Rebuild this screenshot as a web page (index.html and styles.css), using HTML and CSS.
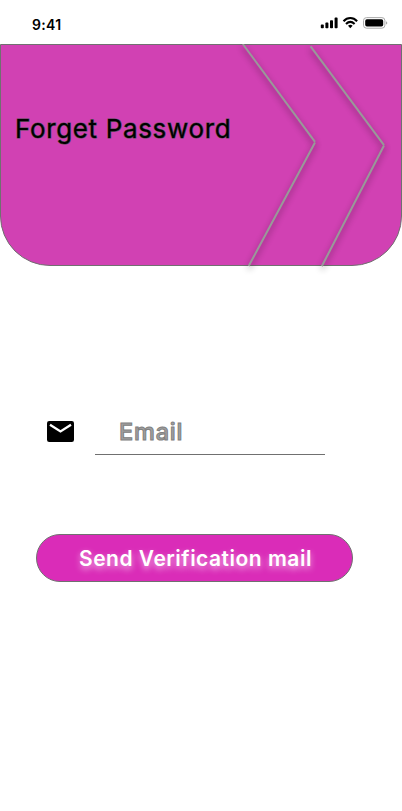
FILE: index.html
```html
<!DOCTYPE html>
<html lang="en">
<head>
<meta charset="utf-8">
<title>Forget Password</title>
<link rel="stylesheet" href="styles.css">
</head>
<body>
<div class="status">
  <span class="time">9:41</span>
  <svg class="indicators" width="68" height="14" viewBox="0 0 68 14">
    <rect x="0.8" y="8.6" width="3" height="3.6" rx="0.8"/>
    <rect x="5.4" y="6.6" width="3" height="5.6" rx="0.8"/>
    <rect x="10" y="4.2" width="3" height="8" rx="0.8"/>
    <rect x="14.6" y="1.6" width="3" height="10.6" rx="0.8"/>
    <g class="wifi">
      <path d="M23.5 5.2C27.5 1 33.1 1 37.1 5.2"/>
      <path d="M26 7.9C28.7 5.3 31.9 5.3 34.6 7.9"/>
    </g>
    <path d="M28 9.8C29.4 8.5 31.2 8.5 32.6 9.8L30.3 12.2Z"/>
    <rect class="shell" x="43.5" y="1.6" width="21.4" height="10.6" rx="3"/>
    <rect x="45.2" y="3.3" width="18" height="7.2" rx="1.7"/>
    <path class="nub" d="M66 5.2Q67.3 5.8 67.3 6.9Q67.3 8 66 8.6Z"/>
  </svg>
</div>
<header class="hero">
  <h1 class="title">Forget Password</h1>
  <svg class="chevrons" width="170" height="235" viewBox="232 44 170 235">
    <path d="M242.8 44L315 141.8"/>
    <path d="M315 142.5L248.7 266"/>
    <path d="M310.6 46.3L384 145.2"/>
    <path d="M384 145.5L321.8 266.3"/>
  </svg>
</header>
<main class="form">
  <label class="field">
    <svg class="mail" width="27" height="21" viewBox="0 0 27 21">
      <rect width="27" height="21" rx="2.2"/>
      <path d="M3 3.7L13.5 10.4L24 3.7"/>
    </svg>
    <span class="input"><span class="placeholder">Email</span></span>
  </label>
  <button class="submit"><span class="caption">Send Verification mail</span></button>
</main>
</body>
</html>
```

FILE: styles.css
```css
* {
  box-sizing: border-box;
}

body {
  margin: 0;
  width: 402px;
  height: 811px;
  overflow: hidden;
  background: #fff;
  font-family: Inter, "Liberation Sans", sans-serif;
}

.status {
  display: flex;
  justify-content: space-between;
  align-items: flex-start;
  height: 44px;
  padding: 16px 14px 0 32px;
}

.time {
  font-size: 14px;
  font-weight: 600;
  line-height: 18px;
  letter-spacing: 0.3px;
}

.wifi {
  fill: none;
  stroke: #000;
  stroke-width: 2.1;
}

.shell {
  fill: none;
  stroke: #aaa;
  stroke-width: 1;
}

.nub {
  fill: #aaa;
}

.hero {
  position: relative;
  height: 222px;
  padding: 65px 0 0 14px;
  background: #d141b3;
  border: 1px solid #707070;
  border-radius: 0 0 50px 50px;
}

.title {
  margin: 0;
  font-size: 26px;
  font-weight: 400;
  line-height: 38px;
  letter-spacing: 0.65px;
  white-space: nowrap;
  -webkit-text-stroke: 1px #505050;
  paint-order: stroke fill;
}

.chevrons {
  position: absolute;
  top: -1px;
  right: -1px;
}

.chevrons path {
  fill: none;
  stroke: #999;
  stroke-width: 2;
  filter: drop-shadow(0 3px 3px rgba(0, 0, 0, 0.45));
}

.form {
  padding: 143px 49px 0 36px;
}

.field {
  display: flex;
  gap: 21px;
  padding-left: 11px;
}

.mail {
  margin-top: 12px;
}

.mail path {
  fill: none;
  stroke: #fff;
  stroke-width: 2.3;
}

.input {
  width: 230px;
  height: 46px;
  padding: 5px 0 0 24px;
  border-bottom: 1px solid #707070;
}

.placeholder {
  font-size: 23.5px;
  font-weight: 500;
  line-height: 36px;
  letter-spacing: 0.8px;
  color: #a0a0a0;
  -webkit-text-stroke: 1px #808080;
}

.submit {
  display: block;
  width: 317px;
  height: 48px;
  margin-top: 79px;
  padding: 1px 0 0 42px;
  border: 1px solid #707070;
  border-radius: 24px;
  background: #da2cb8;
  color: #fff;
  font: 600 21px/46px Inter, "Liberation Sans", sans-serif;
  letter-spacing: 0.5px;
  text-align: left;
  white-space: nowrap;
  text-shadow: 0 3px 6px rgba(255, 255, 255, 0.65);
}
```
